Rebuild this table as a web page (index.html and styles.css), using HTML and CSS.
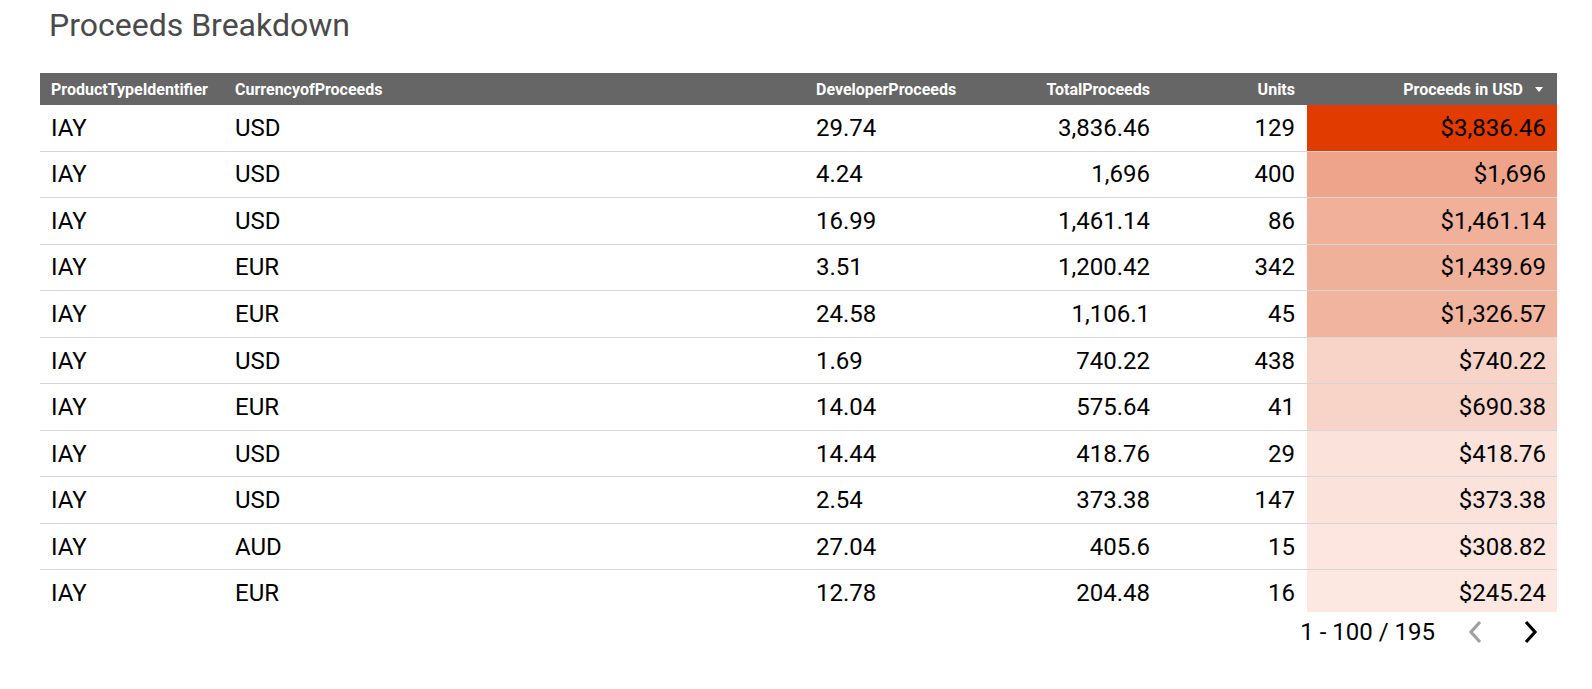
FILE: index.html
```html
<!DOCTYPE html>
<html>
<head>
<meta charset="utf-8">
<link rel="stylesheet" href="styles.css">
</head>
<body>
<div class="page">
  <h1 class="title">Proceeds Breakdown</h1>
  <div class="table">
    <div class="row head">
      <div class="cell">ProductTypeIdentifier</div>
      <div class="cell">CurrencyofProceeds</div>
      <div class="cell">DeveloperProceeds</div>
      <div class="cell num">TotalProceeds</div>
      <div class="cell num">Units</div>
      <div class="cell num sort">Proceeds in USD <span class="arrow"></span></div>
    </div>
    <div class="body">
      <div class="row"><div class="cell">IAY</div><div class="cell">USD</div><div class="cell">29.74</div><div class="cell num">3,836.46</div><div class="cell num">129</div><div class="cell num heat" style="background:#e13b00">$3,836.46</div></div>
      <div class="row"><div class="cell">IAY</div><div class="cell">USD</div><div class="cell">4.24</div><div class="cell num">1,696</div><div class="cell num">400</div><div class="cell num heat" style="background:#eea48b">$1,696</div></div>
      <div class="row"><div class="cell">IAY</div><div class="cell">USD</div><div class="cell">16.99</div><div class="cell num">1,461.14</div><div class="cell num">86</div><div class="cell num heat" style="background:#f0b09a">$1,461.14</div></div>
      <div class="row"><div class="cell">IAY</div><div class="cell">EUR</div><div class="cell">3.51</div><div class="cell num">1,200.42</div><div class="cell num">342</div><div class="cell num heat" style="background:#f0b19b">$1,439.69</div></div>
      <div class="row"><div class="cell">IAY</div><div class="cell">EUR</div><div class="cell">24.58</div><div class="cell num">1,106.1</div><div class="cell num">45</div><div class="cell num heat" style="background:#f1b49e">$1,326.57</div></div>
      <div class="row"><div class="cell">IAY</div><div class="cell">USD</div><div class="cell">1.69</div><div class="cell num">740.22</div><div class="cell num">438</div><div class="cell num heat" style="background:#f8d3c7">$740.22</div></div>
      <div class="row"><div class="cell">IAY</div><div class="cell">EUR</div><div class="cell">14.04</div><div class="cell num">575.64</div><div class="cell num">41</div><div class="cell num heat" style="background:#f8d4c8">$690.38</div></div>
      <div class="row"><div class="cell">IAY</div><div class="cell">USD</div><div class="cell">14.44</div><div class="cell num">418.76</div><div class="cell num">29</div><div class="cell num heat" style="background:#fbe2da">$418.76</div></div>
      <div class="row"><div class="cell">IAY</div><div class="cell">USD</div><div class="cell">2.54</div><div class="cell num">373.38</div><div class="cell num">147</div><div class="cell num heat" style="background:#fbe3db">$373.38</div></div>
      <div class="row"><div class="cell">IAY</div><div class="cell">AUD</div><div class="cell">27.04</div><div class="cell num">405.6</div><div class="cell num">15</div><div class="cell num heat" style="background:#fce6df">$308.82</div></div>
      <div class="row"><div class="cell">IAY</div><div class="cell">EUR</div><div class="cell">12.78</div><div class="cell num">204.48</div><div class="cell num">16</div><div class="cell num heat" style="background:#fce8e1">$245.24</div></div>
    </div>
    <div class="pager">
      <span class="range">1 - 100 / 195</span>
      <span class="btn prev"><svg width="16" height="24" viewBox="0 0 16 24"><path d="M13 2 L4 12 L13 22" fill="none" stroke="#a0a0a0" stroke-width="3.2"/></svg></span>
      <span class="btn next"><svg width="16" height="24" viewBox="0 0 16 24"><path d="M3 2 L12 12 L3 22" fill="none" stroke="#000" stroke-width="3.2"/></svg></span>
    </div>
  </div>
</div>
</body>
</html>
```
FILE: styles.css
```css
* { box-sizing: border-box; }
html, body { margin: 0; padding: 0; background: #fff; }
body { font-family: Roboto, "Liberation Sans", sans-serif; color: #000; }
.page { padding: 7px 35px 0 40px; }
.title {
  margin: 0 0 29px 9px;
  font-size: 32px;
  line-height: 37px;
  font-weight: 400;
  color: #4a4a4a;
}
.table { width: 1517px; }
.row {
  display: grid;
  grid-template-columns: 184px 581px 195px 162px 145px 1fr;
  height: 46.55px;
  border-bottom: 1px solid #d6d6d6;
  font-size: 24px;
}
.row .cell {
  padding: 0 12px 0 11px;
  display: flex;
  align-items: center;
  white-space: nowrap;
}
.row .num { justify-content: flex-end; }
.row .heat { padding-right: 11px; }
.head {
  height: 32px;
  background: #666666;
  border-bottom: none;
  color: #fff;
  font-size: 16px;
  font-weight: 700;
}
.head .cell { padding-top: 1px; }
.head .sort { padding-right: 14px; }
.arrow {
  display: inline-block;
  width: 0; height: 0;
  margin-left: 12px;
  border-left: 4px solid transparent;
  border-right: 4px solid transparent;
  border-top: 5px solid #fff;
}
.body { height: 507px; overflow: hidden; }
.pager {
  display: flex;
  justify-content: flex-end;
  align-items: center;
  height: 40px;
  padding-right: 18px;
  font-size: 24px;
}
.range { margin-right: 32px; }
.btn { display: flex; align-items: center; }
.prev { margin-right: 40px; }
```
